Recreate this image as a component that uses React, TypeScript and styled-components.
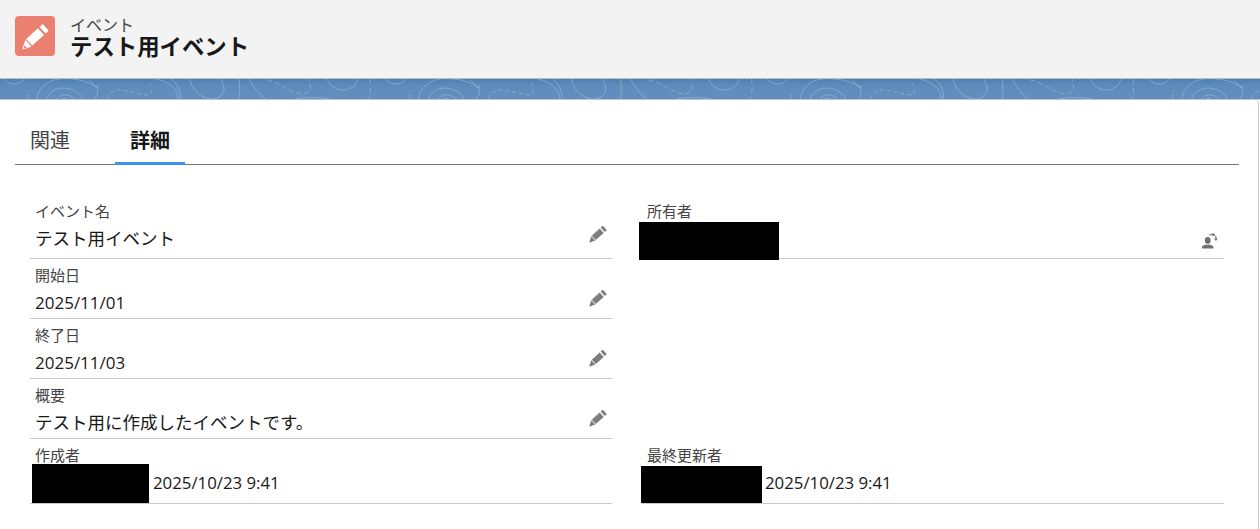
import React from "react";
import styled, { createGlobalStyle } from "styled-components";

const Global = createGlobalStyle`
  html, body { margin: 0; padding: 0; background: #fff; }
  body { font-family: "Open Sans", "Noto Sans CJK JP", sans-serif; color: #181818; overflow: hidden; }
`;
const Page = styled.div`width: 1260px; height: 529px; overflow: hidden; background: #fff;`;
const Header = styled.header`
  height: 79px; box-sizing: border-box; background: #f3f3f3; border-bottom: 1px solid #bdbdbd;
  display: flex; align-items: flex-start; gap: 15px; padding: 16px 0 0 15px;
`;
const ObjectIcon = styled.div`
  width: 40px; height: 40px; border-radius: 4px; background: #eb8070; flex: none;
`;
const Glyph = styled.svg`display: block;`;
const Titles = styled.div`display: flex; flex-direction: column; margin-top: -2px;`;
const Kicker = styled.div`font-size: 16px; line-height: 22px; color: #444;`;
const Title = styled.h1`margin: 0; font-size: 22.4px; line-height: 22px; font-weight: 700; color: #181818;`;
const Band = styled.div`
  height: 21px; box-sizing: border-box; border-bottom: 1px solid #b9c6d4;
  background: linear-gradient(#4f7fb0, #5d8cbc 35%, #6190bf);
`;
const BandArt = styled.svg`display: block; width: 1260px; height: 20px;`;
const Card = styled.main`
  margin-right: 1px; height: 429px; background: #fff; border-right: 1px solid #c9c9c9;
  border-top-right-radius: 4px; padding: 0 19px 0 15px;
`;
const Tabs = styled.nav`display: flex; height: 65px; box-sizing: border-box; border-bottom: 1px solid #747474; align-items: stretch;`;
const Tab = styled.div<{ $active?: boolean }>`
  width: 70px; margin-right: ${(p) => (p.$active ? 0 : 30)}px; box-sizing: border-box; padding-top: 26px; margin-bottom: -1px;
  text-align: center; font-size: 20px; line-height: 30px;
  font-weight: ${(p) => (p.$active ? 700 : 400)};
  color: ${(p) => (p.$active ? "#181818" : "#444")};
  border-bottom: 3px solid ${(p) => (p.$active ? "#3e93f0" : "transparent")};
`;
const Form = styled.section`
  display: grid; grid-template-columns: 582px 582px; column-gap: 30px; padding: 30px 0 0 15px;
`;
const Field = styled.div<{ $h: number }>`
  height: ${(p) => p.$h}px; box-sizing: border-box; border-bottom: 1px solid #c9c9c9;
  position: relative;
`;
const Blank = styled.div``;
const Label = styled.div`
  padding: 7px 0 0 5px; font-size: 15px; line-height: 18px; color: #444;
`;
const ValueRow = styled.div`
  display: flex; align-items: center; height: 24px; padding: 5px 0 0 5px;
  font-size: 17.5px; color: #181818;
`;
const DateText = styled.span<{ $x?: number; $size?: number }>`
  padding-left: ${(p) => p.$x ?? 0}px; font-size: ${(p) => p.$size ?? 17}px; position: relative; top: 1px;
`;
const ActionIcon = styled.svg`margin: -6px 5px 0 auto; flex: none; display: block;`;
const OwnerIcon = styled.svg`margin: 8px 5px 0 auto; flex: none; display: block;`;
const Redaction = styled.div<{ $w: number; $h: number; $x: number; $y: number }>`
  position: absolute; left: ${(p) => p.$x}px; top: ${(p) => p.$y}px;
  width: ${(p) => p.$w}px; height: ${(p) => p.$h}px; background: #000;
`;

const PENCIL_BODY = "M11.2 23L23 12.3L29 18.9L17.2 29.6ZM24.5 10.9L27 8.6Q27.8 8 28.5 8.8L33.2 14Q33.8 14.8 33.1 15.4L30.5 17.5Z";
const PENCIL_TIP = "M10.4 23.8L16.4 30.4L8.8 33.2Q7.4 33.4 7.7 32Z";

const Pencil = () => (
  <ActionIcon width="18" height="18" viewBox="7 7 27 27">
    <path d={PENCIL_BODY} fill="#7d7d7d" />
    <path d={PENCIL_TIP} fill="#7d7d7d" />
  </ActionIcon>
);
const ChangeOwner = () => (
  <OwnerIcon width="18" height="18" viewBox="0 0 18 18">
    <ellipse cx="6.7" cy="8.4" rx="2.9" ry="3.4" fill="#6f6f6f" />
    <path d="M1 16.6v-1.4c0-1 1-1.5 3.6-2.4h4.2c2.6.9 3.6 1.4 3.6 2.4v1.4z" fill="#6f6f6f" />
    <path d="M8.6 3.1c1.6-.9 3.2-.8 4.3 0" fill="none" stroke="#6f6f6f" strokeWidth="1.2" />
    <path d="M12 .9l2.6 2.3-3 1z" fill="#6f6f6f" />
    <path d="M14.4 4.2c.8 1 1 2.2.6 3.2" fill="none" stroke="#6f6f6f" strokeWidth="1.2" />
    <path d="M13 6.6l3.5.2-1.6 2.2z" fill="#6f6f6f" />
  </OwnerIcon>
);

const PERIOD = 381.6;
const motifs = [-1, 0, 1, 2, 3].map((k) => 63 + k * PERIOD);
const BandPattern = () => (
  <BandArt viewBox="0 0 1260 20">
    <g fill="none" stroke="#b4cde6" strokeOpacity=".45" strokeWidth="1">
      {motifs.map((x) => (
        <g key={x} transform={`translate(${x} 0)`}>
          <path d="M-35 20c-.5-2 0-6 1-9" strokeDasharray="5 3" />
          <path d="M-26 20C-25 8-14 0 0-.5c14 0 26 3 34 9 2 4 0 8-2 11" />
          <path d="M-16 20c2-7 9-11 16-11s14 3 18 8l1 3" />
          <path d="M-6 20c2-3 6-5 9-4 3 0 6 2 8 4M-2 20c2-1 4-1 6 0" />
          <path d="M26 1l8 8 1-3" />
          <path d="M44 20c1-6 6-9 12-9 8 0 18 4 30 5 3-3 3-8 0-13" strokeDasharray="4 3" />
          <path d="M93 0c14 3 22 10 22 20M108 0c7 5 10 12 9 20" />
          <path d="M127 0c1 8 8 18 20 20 7 1 13-4 14-8 1-4-2-8-3-12" />
          <path d="M176 0c1 6 1 13 0 20" />
          <path d="M186 0c4 8 10 15 16 20" />
          <path d="M204 1c12 2 18 9 30 13 6 2 12 0 13-3 1-3 0-7-1-11" strokeDasharray="5 3" />
          <path d="M264 0c3 7 9 11 16 11 8 0 13-5 15-11" />
          <path d="M307 0c1 7 1 13-2 20" strokeDasharray="5 4" />
          <path d="M322 0c3 3 7 5 11 5 4 0 8-2 10-5" />
          <path d="M232 20c10-2 24-2 34 0" />
        </g>
      ))}
    </g>
  </BandArt>
);

export default function App() {
  return (
    <Page>
      <Global />
      <Header>
        <ObjectIcon>
          <Glyph width="40" height="40" viewBox="0 0 40 40">
            <path d={PENCIL_BODY} fill="#fff" />
            <path d={PENCIL_TIP} fill="#fff" />
            <path d="M9.4 29.2L11.9 31.7L8.8 32.6Z" fill="#eb8070" />
          </Glyph>
        </ObjectIcon>
        <Titles>
          <Kicker>イベント</Kicker>
          <Title>テスト用イベント</Title>
        </Titles>
      </Header>
      <Band><BandPattern /></Band>
      <Card>
        <Tabs>
          <Tab>関連</Tab>
          <Tab $active>詳細</Tab>
        </Tabs>
        <Form>
          <Field $h={64}>
            <Label>イベント名</Label>
            <ValueRow>テスト用イベント<Pencil /></ValueRow>
          </Field>
          <Field $h={64}>
            <Label>所有者</Label>
            <ValueRow><ChangeOwner /></ValueRow>
            <Redaction $x={-3} $y={27} $w={140} $h={38} />
          </Field>
          <Field $h={60}>
            <Label>開始日</Label>
            <ValueRow><DateText>2025/11/01</DateText><Pencil /></ValueRow>
          </Field>
          <Blank />
          <Field $h={60}>
            <Label>終了日</Label>
            <ValueRow><DateText>2025/11/03</DateText><Pencil /></ValueRow>
          </Field>
          <Blank />
          <Field $h={60}>
            <Label>概要</Label>
            <ValueRow>テスト用に作成したイベントです。<Pencil /></ValueRow>
          </Field>
          <Blank />
          <Field $h={65}>
            <Label>作成者</Label>
            <ValueRow><DateText $x={118} $size={16.8}>2025/10/23 9:41</DateText></ValueRow>
            <Redaction $x={2} $y={25} $w={117} $h={39} />
          </Field>
          <Field $h={65}>
            <Label>最終更新者</Label>
            <ValueRow><DateText $x={118} $size={16.8}>2025/10/23 9:41</DateText></ValueRow>
            <Redaction $x={-1} $y={27} $w={121} $h={37} />
          </Field>
        </Form>
      </Card>
    </Page>
  );
}
